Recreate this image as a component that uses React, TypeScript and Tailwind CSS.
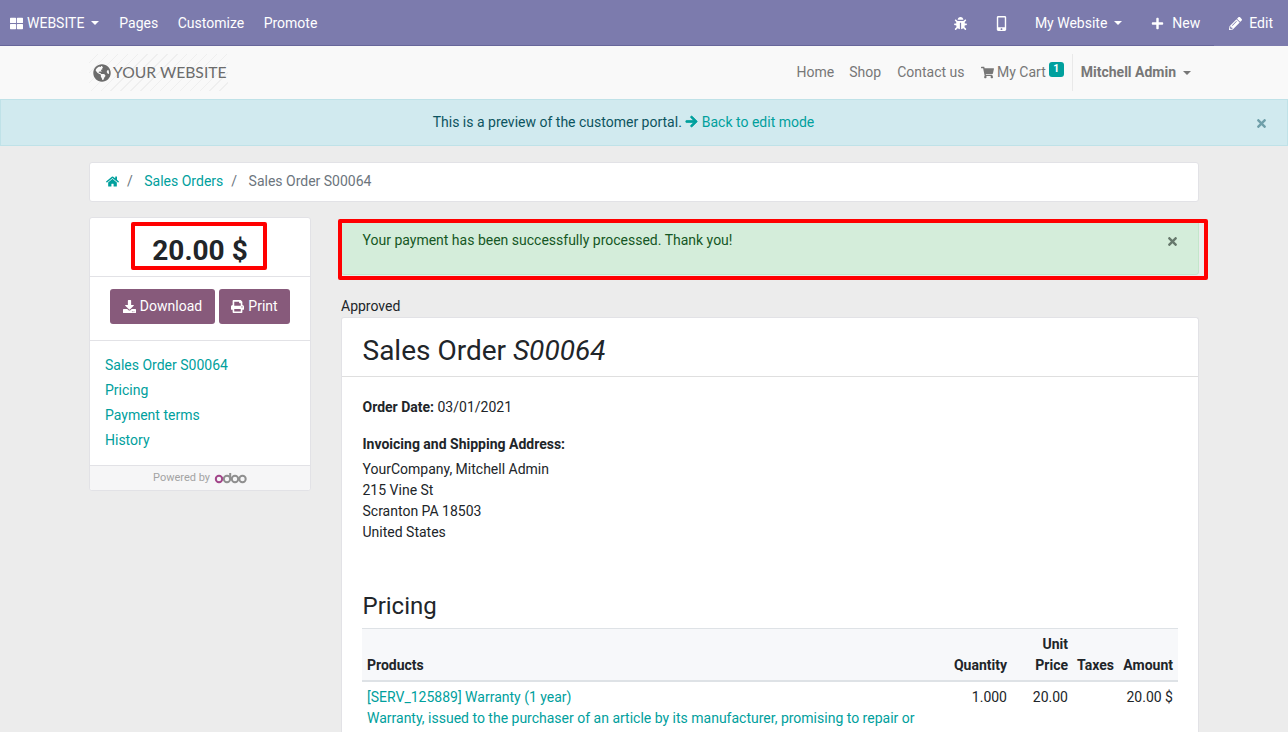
import {
  FaThLarge,
  FaBug,
  FaMobileAlt,
  FaPlus,
  FaPencilAlt,
  FaShoppingCart,
  FaHome,
  FaDownload,
  FaPrint,
  FaArrowRight,
  FaTimes,
  FaGlobeAmericas,
} from 'react-icons/fa';

function Caret() {
  return <span className="inline-block ml-[7px] align-[2px] border-x-[4.5px] border-t-[4.5px] border-x-transparent border-t-current" />;
}

function OdooLogo() {
  return (
    <svg width="33" height="12" viewBox="0 0 33 12" className="ml-[4px]">
      <circle cx="5" cy="7" r="3.2" fill="none" stroke="#a24689" strokeWidth="2" />
      <circle cx="13" cy="7" r="3.2" fill="none" stroke="#8f8f8f" strokeWidth="2" />
      <path d="M16.2 1v6" stroke="#8f8f8f" strokeWidth="2" />
      <circle cx="21" cy="7" r="3.2" fill="none" stroke="#8f8f8f" strokeWidth="2" />
      <circle cx="28.5" cy="7" r="3.2" fill="none" stroke="#8f8f8f" strokeWidth="2" />
    </svg>
  );
}

function TopBar() {
  return (
    <div className="relative h-[46px] bg-[#7c7bad] text-white flex items-center justify-between pl-[10px] pr-[15px] text-[14px]">
      {/* border stops short of the Edit button */}
      <div className="absolute left-0 bottom-0 h-px w-[1214px] bg-[#67669a]" />
      <div className="flex items-center">
        <FaThLarge className="w-[13px] h-[13px] mr-[4px]" />
        <span>WEBSITE</span>
        <Caret />
        <span className="ml-[20px]">Pages</span>
        <span className="ml-[19.5px]">Customize</span>
        <span className="ml-[19.5px]">Promote</span>
      </div>
      <div className="flex items-center">
        <FaBug className="w-[13px] h-[13px]" />
        <FaMobileAlt className="w-[13px] h-[15px] ml-[28px]" />
        <span className="ml-[27px]">My Website</span>
        <Caret />
        <FaPlus className="w-[13px] h-[13px] ml-[29px]" />
        <span className="ml-[8px]">New</span>
        <FaPencilAlt className="w-[13px] h-[13px] ml-[29px]" />
        <span className="ml-[7px]">Edit</span>
      </div>
    </div>
  );
}

function SiteHeader() {
  return (
    <div className="h-[53px] bg-[#f9f9f9] pl-[89px] pr-[89px] flex items-center justify-between text-[14px] text-[#777777]">
      <div className="h-[37px] w-[139px] flex items-center pl-[4px] text-[#6c6c6c] whitespace-nowrap bg-[repeating-linear-gradient(135deg,#f9f9f9_0px,#f9f9f9_6px,#efefef_6px,#efefef_7px)]">
        <FaGlobeAmericas className="w-[18px] h-[18px] shrink-0" />
        <span className="ml-[2px] font-['Lato',sans-serif] text-[15.7px]">YOUR WEBSITE</span>
      </div>
      <div className="flex items-center">
        <span>Home</span>
        <span className="ml-[15px]">Shop</span>
        <span className="ml-[16px]">Contact us</span>
        <FaShoppingCart className="w-[13px] h-[13px] ml-[16.5px] mr-[3px]" />
        <span>My Cart</span>
        <span className="ml-[3px] mb-[7px] h-[15px] w-[15px] rounded-[3px] bg-[#00a09d] text-white text-[10.5px] font-bold flex items-center justify-center">1</span>
        <div className="ml-[8px] h-[37px] border-l border-[#e9e9e9]" />
        <span className="ml-[8px] font-bold">Mitchell Admin</span>
        <Caret />
        <span className="w-[8px]" />
      </div>
    </div>
  );
}

function PreviewAlert() {
  return (
    <div className="h-[47px] bg-[#d1eaef] border border-[#bfe2e8] pr-[41px] flex items-center justify-center relative text-[14px] text-[#0c5460]">
      <span>
        This is a preview of the customer portal.{' '}
        <span className="text-[#00a09d]">
          <FaArrowRight className="inline w-[13px] h-[13px] align-[-1px]" stroke="currentColor" strokeWidth={30} /> Back to edit mode
        </span>
      </span>
      <FaTimes className="absolute right-[19px] top-[17px] w-[13px] h-[13px] text-[#6f9fa9]" />
    </div>
  );
}

function Sidebar() {
  return (
    <div className="w-[222px] h-[274px] shrink-0 bg-white rounded-[3px] border border-[#e2e2e6] flex flex-col">
      <div className="h-[59px] border-b border-[#e2e2e6] pt-[8px] flex items-center justify-center text-[28px] font-bold text-[#212529]">
        20.00 $
      </div>
      <div className="h-[64px] border-b border-[#e2e2e6] pt-[12px] flex justify-center items-start gap-[4px] text-white">
        <div className="h-[35px] w-[105px] rounded-[3px] bg-[#875a7b] flex items-center justify-center">
          <FaDownload className="w-[13px] h-[13px] mr-[4px]" />
          Download
        </div>
        <div className="h-[35px] w-[71px] rounded-[3px] bg-[#875a7b] flex items-center justify-center">
          <FaPrint className="w-[13px] h-[13px] mr-[4px]" />
          Print
        </div>
      </div>
      <div className="flex-1 pl-[15px] pt-[14px] flex flex-col gap-[4px] text-[#00a09d] leading-[21px]">
        <span>Sales Order S00064</span>
        <span>Pricing</span>
        <span>Payment terms</span>
        <span>History</span>
      </div>
      <div className="h-[25px] bg-[#f6f6f7] border-t border-[#e2e2e6] rounded-b-[3px] flex items-center justify-center text-[11px] text-[#a3a3a3]">
        Powered by
        <OdooLogo />
      </div>
    </div>
  );
}

function OrderCard() {
  return (
    <div className="bg-white rounded-[3px] border border-[#e2e2e6] border-b-0 flex-1">
      <div className="h-[59px] border-b border-[#dfdfdf] pl-[20.5px] pt-[8px] flex items-center text-[28px] text-[#212529]">
        <span>
          Sales Order <em>S00064</em>
        </span>
      </div>
      <div className="px-[20px] pt-[20px] text-[#212529]">
        <div className="leading-[21px] ml-[0.5px]">
          <b className="font-bold">Order Date:</b> 03/01/2021
        </div>
        <div className="mt-[16px] ml-[0.5px] leading-[21px] font-bold">Invoicing and Shipping Address:</div>
        <div className="mt-[4px] ml-[0.5px] leading-[21px]">
          <div>YourCompany, Mitchell Admin</div>
          <div>215 Vine St</div>
          <div>Scranton PA 18503</div>
          <div>United States</div>
        </div>
        <h3 className="mt-[49px] ml-[0.5px] text-[24px] leading-[29px]">Pricing</h3>
        <table className="mt-[7px] w-full border-collapse">
          <thead>
            <tr className="bg-[#f7f8fa] border-t border-b-2 border-t-[#dee2e6] border-b-[#dee2e6] font-bold align-bottom leading-[21px]">
              <th className="text-left font-bold pl-[5px] pb-[4px] pt-[5px]">Products</th>
              <th className="text-right font-bold w-[60px] pb-[4px]">Quantity</th>
              <th className="text-right font-bold w-[61px] pb-[4px] pt-[5px]">
                Unit
                <br />
                Price
              </th>
              <th className="text-right font-bold w-[46px] pb-[4px]">Taxes</th>
              <th className="text-right font-bold w-[64px] pr-[5px] pb-[4px]">Amount</th>
            </tr>
          </thead>
          <tbody>
            <tr className="align-top leading-[21px]">
              <td className="pl-[5px] pt-[5px] text-[#00a09d]">
                <div>[SERV_125889] Warranty (1 year)</div>
                <div>Warranty, issued to the purchaser of an article by its manufacturer, promising to repair or</div>
              </td>
              <td className="text-right pt-[5px]">1.000</td>
              <td className="text-right pt-[5px]">20.00</td>
              <td />
              <td className="text-right pt-[5px] pr-[5px]">20.00 $</td>
            </tr>
          </tbody>
        </table>
      </div>
    </div>
  );
}

export default function App() {
  return (
    <div className="h-screen overflow-hidden bg-[#ececec] font-['Roboto',sans-serif] text-[14px] relative">
      <TopBar />
      <SiteHeader />
      <PreviewAlert />

      <div className="px-[89px] pt-[16px]">
        {/* Breadcrumb */}
        <div className="h-[40px] bg-white rounded-[3px] border border-[#e2e2e6] flex items-center pl-[16px] pb-[1px] text-[#6c757d]">
          <FaHome className="w-[13px] h-[13px] text-[#00a09d]" />
          <span className="ml-[8px]">/</span>
          <span className="ml-[11.5px] text-[#00a09d]">Sales Orders</span>
          <span className="ml-[8px]">/</span>
          <span className="ml-[11.5px]">Sales Order S00064</span>
        </div>

        <div className="flex mt-[15px] gap-[30px]">
          <Sidebar />
          <div className="flex-1 flex flex-col h-[600px]">
            <div className="h-[56px] mt-[2px] bg-[#d4edda] border border-[#c3e6cb] rounded-[3px] pl-[20.5px] pt-[10px] leading-[21px] text-[#155724] relative">
              Your payment has been successfully processed. Thank you!
              <FaTimes className="absolute right-[19px] top-[15px] w-[13px] h-[13px] text-[#66786c]" />
            </div>
            <div className="mt-[21px] leading-[21px] text-[#212529]">Approved</div>
            <OrderCard />
          </div>
        </div>
      </div>

      {/* red annotation boxes drawn over the screenshot */}
      <div className="absolute left-[131px] top-[222px] w-[136px] h-[48px] border-[4px] border-[#ff0000] rounded-[2px]" />
      <div className="absolute left-[338px] top-[219px] w-[870px] h-[61px] border-[4px] border-[#ff0000] rounded-[2px]" />
    </div>
  );
}
